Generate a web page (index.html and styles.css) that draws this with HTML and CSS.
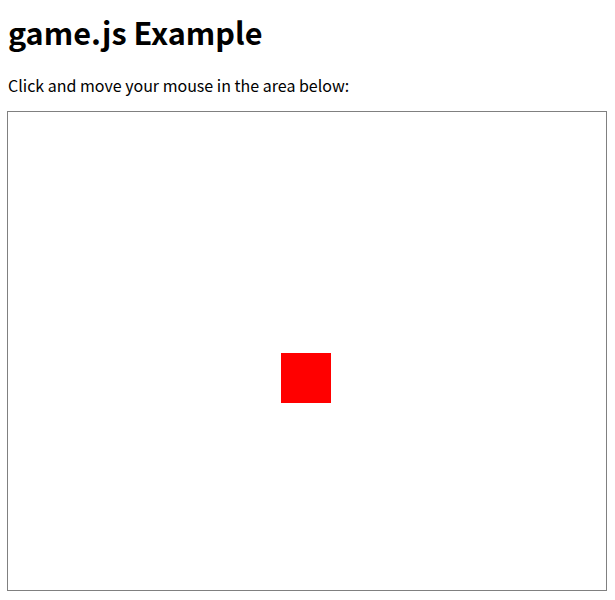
FILE: index.html
```html
<!DOCTYPE html>
<html>
<head>
<meta charset="utf-8">
<title>game.js Example</title>
<link rel="stylesheet" href="styles.css">
</head>
<body>
<h1 class="title">game.js Example</h1>
<p class="intro">Click and move your mouse in the area below:</p>
<div class="stage">
  <div class="player"></div>
</div>
</body>
</html>
```
FILE: styles.css
```css
html, body {
  margin: 0;
  padding: 0;
  background: #fff;
}
body {
  padding: 0 8px;
  font-family: "Noto Sans CJK KR", "Open Sans", sans-serif;
  color: #000;
}
.title {
  font-size: 30.6px;
  font-weight: bold;
  line-height: 42px;
  margin: 11px 0 0 0;
}
.intro {
  font-size: 16px;
  line-height: 22px;
  margin: 21px 0 0 0;
}
.stage {
  position: relative;
  margin: 15px 0 0 -1px;
  width: 598px;
  height: 478px;
  border: 1px solid #808080;
}
.player {
  position: absolute;
  left: 273px;
  top: 241px;
  width: 50px;
  height: 50px;
  background: #ff0000;
}
```
